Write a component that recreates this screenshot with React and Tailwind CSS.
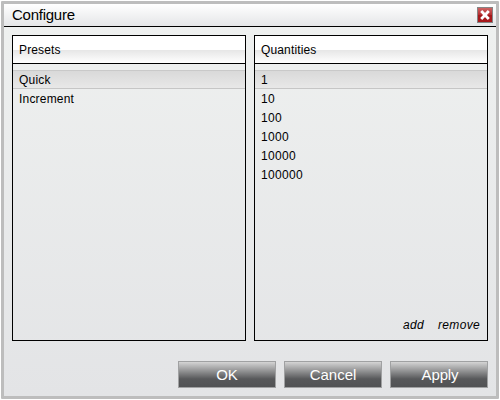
const presets = ["Quick", "Increment"];
const quantities = ["1", "10", "100", "1000", "10000", "100000"];

function Panel({ title, items, itemSpacing, children }) {
  return (
    <section className="flex h-[306px] w-[234px] flex-col border border-black">
      <h2 className="h-[28px] border-b border-black bg-[linear-gradient(#fff_0_14px,#e6e6e6_14px,#fff_27px)] pl-[6px] text-[12px] leading-[28px] tracking-[0.14px]">
        {title}
      </h2>
      <ul className={`mt-[6px] grow ${itemSpacing}`}>
        {items.map((item, i) => (
          <li
            key={item}
            className={
              i === 0
                ? "h-[19px] border-y border-t-[#c9c9c9] border-b-[#c6c6c6] bg-linear-to-b from-[#d9d9d9] to-[#e8e8e8] pl-[6px] text-[12px] leading-[18px]"
                : "h-[19px] pl-[6px] text-[12px] leading-[20px]"
            }
          >
            {item}
          </li>
        ))}
      </ul>
      {children}
    </section>
  );
}

function Button({ children }) {
  return (
    <button className="h-[27px] w-[98px] border border-[#a0a1a2] bg-[linear-gradient(#d4d4d4,#57585a_68%,#515254)] text-[15px] leading-[25px] text-white">
      {children}
    </button>
  );
}

export default function App() {
  return (
    <div className="h-[400px] w-[500px] bg-white p-px font-['Liberation_Sans',Arial,sans-serif] text-black">
      <div className="flex h-[398px] w-[498px] flex-col rounded-[1px] border-[3px] border-[#bdbdbd] bg-linear-to-b from-[#eff1f0] to-[#e3e4e6]">
        <header className="flex h-[23px] items-start justify-between border-b border-black bg-linear-to-b from-white to-[#e5e6e8] pr-[3px] pl-[8px]">
          <h1 className="text-[15px] leading-[22px] tracking-[-0.25px]">Configure</h1>
          <button aria-label="Close" className="mt-[3px] h-[16px] w-[16px]">
            <svg width="16" height="16" viewBox="0 0 16 16">
              <defs>
                <linearGradient id="closeFill" x1="0" y1="0" x2="0" y2="1">
                  <stop offset="0" stopColor="#cf6767" />
                  <stop offset="0.5" stopColor="#b52d2f" />
                  <stop offset="0.5" stopColor="#a4191c" />
                  <stop offset="1" stopColor="#a8191c" />
                </linearGradient>
              </defs>
              <rect x="0.5" y="0.5" width="15" height="15" fill="url(#closeFill)" stroke="#858585" />
              <path d="M4.2 4L11.8 12M11.8 4L4.2 12" stroke="white" strokeWidth="2.8" />
            </svg>
          </button>
        </header>
        <main className="flex gap-[8px] pt-[8px] pl-[8px]">
          <Panel title="Presets" items={presets} itemSpacing="tracking-[0.2px]" />
          <Panel title="Quantities" items={quantities} itemSpacing="tracking-[0.33px]">
            <div className="flex justify-end gap-[14px] pr-[7px] pb-[8px] text-[12px] leading-[14px] italic">
              <button className="tracking-[0.33px]">add</button>
              <button className="tracking-[0.33px]">remove</button>
            </div>
          </Panel>
        </main>
        <footer className="flex justify-end gap-[8px] pt-[20px] pr-[8px]">
          <Button>OK</Button>
          <Button>Cancel</Button>
          <Button>
            <span className="relative left-px tracking-[-0.15px]">Apply</span>
          </Button>
        </footer>
      </div>
    </div>
  );
}
